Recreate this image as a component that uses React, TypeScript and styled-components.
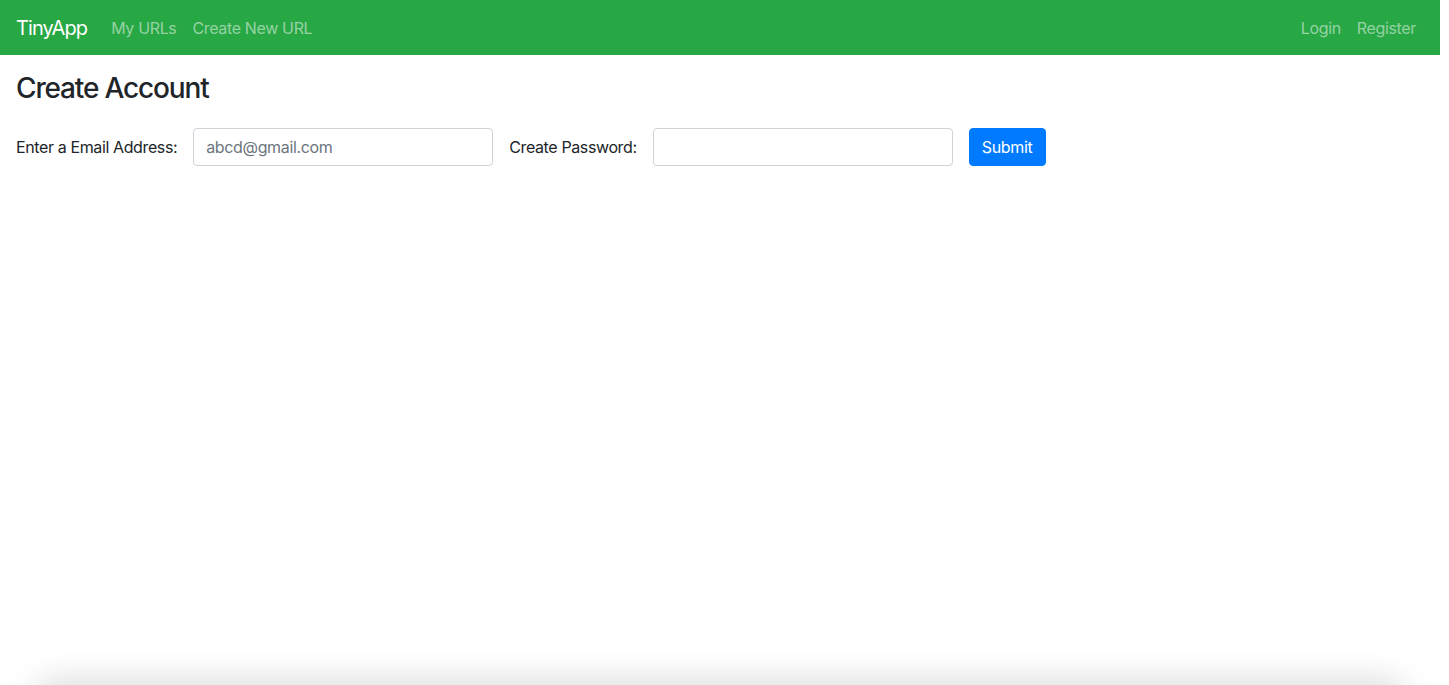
import React from "react";
import styled, { createGlobalStyle } from "styled-components";

const Global = createGlobalStyle`
  html, body { margin: 0; padding: 0; background: #fff; }
  body {
    font-family: Inter, "Liberation Sans", Arial, sans-serif;
    font-size: 16px;
    line-height: 1.5;
    color: #212529;
    overflow: hidden;
  }
  * { box-sizing: border-box; }
`;

const Page = styled.div`
  width: 1440px;
  height: 685px;
  position: relative;
  overflow: hidden;
`;

const Navbar = styled.nav`
  display: flex;
  align-items: center;
  height: 55px;
  padding: 8px 16px;
  background: #28a745;
`;

const Brand = styled.a`
  font-size: 20px;
  color: #fff;
  margin-right: 16px;
  text-decoration: none;
  letter-spacing: -0.9px;
`;

const NavGroup = styled.div<{ $right?: boolean }>`
  display: flex;
  margin-left: ${(p) => (p.$right ? "auto" : "0")};
`;

const NavLink = styled.a`
  padding: 8px;
  color: rgba(255, 255, 255, 0.5);
  text-decoration: none;
  font-size: 16px;
  letter-spacing: -0.35px;
`;

const Main = styled.main`
  padding: 17px 16px 0;
`;

const Title = styled.h3`
  margin: 0 0 22px;
  font-size: 28px;
  font-weight: 500;
  line-height: 1.2;
  letter-spacing: -1.15px;
`;

const Form = styled.form`
  display: flex;
  align-items: center;
  gap: 16px;
`;

const Label = styled.label`
  font-size: 16px;
  letter-spacing: -0.38px;
`;

const Input = styled.input`
  width: 300px;
  height: 38px;
  padding: 6px 12px;
  font-family: inherit;
  font-size: 16px;
  color: #495057;
  border: 1px solid #ced4da;
  border-radius: 4px;
  outline: none;
  letter-spacing: -0.35px;
  &::placeholder { color: #6c757d; opacity: 1; }
`;

const Button = styled.button`
  height: 38px;
  width: 77px;
  padding: 6px 12px;
  font-family: inherit;
  font-size: 16px;
  color: #fff;
  background: #007bff;
  border: 1px solid #007bff;
  border-radius: 4px;
  letter-spacing: -0.35px;
`;

const BottomShade = styled.div`
  position: absolute;
  left: 40px;
  right: 40px;
  bottom: -40px;
  height: 40px;
  border-radius: 30px;
  box-shadow: 0 0 30px 8px rgba(0, 0, 0, 0.12);
`;

export default function App() {
  return (
    <>
      <Global />
      <Page>
        <Navbar>
          <Brand href="#">TinyApp</Brand>
          <NavGroup>
            <NavLink href="#">My URLs</NavLink>
            <NavLink href="#">Create New URL</NavLink>
          </NavGroup>
          <NavGroup $right>
            <NavLink href="#">Login</NavLink>
            <NavLink href="#">Register</NavLink>
          </NavGroup>
        </Navbar>
        <Main>
          <Title>Create Account</Title>
          <Form onSubmit={(e) => e.preventDefault()}>
            <Label htmlFor="email">Enter a Email Address:</Label>
            <Input id="email" type="email" placeholder="abcd@gmail.com" />
            <Label htmlFor="password">Create Password:</Label>
            <Input id="password" type="password" />
            <Button type="submit">Submit</Button>
          </Form>
        </Main>
        <BottomShade />
      </Page>
    </>
  );
}
